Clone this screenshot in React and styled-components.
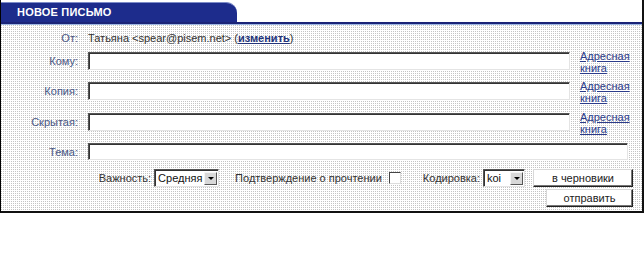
import React from "react";
import styled, { createGlobalStyle } from "styled-components";

const GlobalStyle = createGlobalStyle`
  body {
    margin: 0;
    background: #fff;
    font-family: "Liberation Sans", Arial, sans-serif;
  }
`;

const Frame = styled.div`
  width: 644px;
  box-sizing: border-box;
  border-left: 1px solid #000;
  border-right: 2px solid #111;
  border-bottom: 2px solid #111;
  font-size: 11px;
  color: #333;
`;

const Header = styled.div`
  height: 22px;
  display: flex;
  align-items: flex-end;
  background: #fff;
`;

const Tab = styled.div`
  width: 236px;
  height: 20px;
  box-sizing: border-box;
  background: #1d2c8c;
  border-top: 1px solid #7d8cc8;
  border-top-right-radius: 11px;
  color: #fff;
  font-weight: bold;
  font-size: 11px;
  line-height: 19px;
  padding-left: 16px;
  letter-spacing: 0.2px;
`;

const HeaderLine = styled.div`
  height: 2px;
  background: #1a2478;
  border-bottom: 1px solid #9eb6e2;
`;

const Body = styled.div`
  background-color: #fff;
  background-image: linear-gradient(90deg, transparent 1px, #fff 1px),
    linear-gradient(#c4c4c4 1px, #fff 1px);
  background-size: 2px 2px;
  padding: 6px 9px 4px 0;
`;

const Grid = styled.div`
  display: grid;
  grid-template-columns: 77px 482px 50px;
  grid-template-rows: 21px 30px 31px 30px 26px;
  column-gap: 10px;
  align-items: start;
`;

const Label = styled.div`
  text-align: right;
  color: #4a5784;
  line-height: ${(p) => (p.$tall ? "18px" : "14px")};
`;

const FromText = styled.div`
  grid-column: 2 / 4;
  line-height: 14px;
  white-space: nowrap;
`;

const ChangeLink = styled.a`
  color: #24347a;
  font-weight: bold;
  text-decoration: underline;
`;

const TextInput = styled.div`
  height: ${(p) => (p.$wide ? 17 : 18)}px;
  box-sizing: border-box;
  background: #fff;
  border: 1px solid;
  border-color: #555 #e4e4e4 #e4e4e4 #555;
  box-shadow: inset 1px 1px 0 #333;
  grid-column: ${(p) => (p.$wide ? "2 / 4" : "2")};
  margin-right: ${(p) => (p.$wide ? 2 : 0)}px;
`;

const BookLink = styled.a`
  color: #2b3b8a;
  text-decoration: underline;
  line-height: 12px;
  margin-top: -2px;
  font-size: 11px;
`;

const Controls = styled.div`
  display: flex;
  justify-content: flex-end;
  align-items: center;
  color: #333;
  white-space: nowrap;
`;

const Group = styled.div`
  display: flex;
  align-items: center;
  margin-left: ${(p) => p.$gap || 0}px;
`;

const SelectBox = styled.div`
  display: flex;
  align-items: center;
  justify-content: space-between;
  width: ${(p) => p.$w}px;
  height: 18px;
  box-sizing: border-box;
  margin-left: 3px;
  background: #fff;
  border: 1px solid;
  border-color: #555 #e4e4e4 #e4e4e4 #555;
  box-shadow: inset 1px 1px 0 #333;
  padding: 1px 1px 1px 3px;
  font-size: 11px;
  color: #111;
`;

const Arrow = styled.span`
  width: 13px;
  height: 13px;
  box-sizing: border-box;
  background: #d8d8d8;
  border: 1px solid;
  border-color: #f4f4f4 #555 #555 #f4f4f4;
  display: flex;
  align-items: center;
  justify-content: center;
  &::after {
    content: "";
    border-left: 3px solid transparent;
    border-right: 3px solid transparent;
    border-top: 3px solid #000;
  }
`;

const CheckBox = styled.span`
  width: 12px;
  height: 12px;
  box-sizing: border-box;
  margin-left: 7px;
  background: #fff;
  border: 1px solid;
  border-color: #444 #ddd #ddd #444;
`;

const Button = styled.button`
  width: ${(p) => p.$w}px;
  height: ${(p) => p.$h}px;
  margin-left: ${(p) => p.$ml || 0}px;
  padding: 0;
  box-sizing: border-box;
  background: #fff;
  border: 1px solid;
  border-color: #d8d8d8 #222 #222 #d8d8d8;
  box-shadow: inset -1px -1px 0 #777;
  font-family: "Liberation Sans", Arial, sans-serif;
  font-size: 11px;
  color: #222;
  cursor: pointer;
`;

const SendRow = styled.div`
  display: flex;
  justify-content: flex-end;
  margin-top: 2px;
`;

export default function App() {
  return (
    <>
      <GlobalStyle />
      <Frame>
        <Header>
          <Tab>НОВОЕ ПИСЬМО</Tab>
        </Header>
        <HeaderLine />
        <Body>
          <Grid>
            <Label>От:</Label>
            <FromText>
              Татьяна &lt;spear@pisem.net&gt; (<ChangeLink>изменить</ChangeLink>)
            </FromText>

            <Label $tall>Кому:</Label>
            <TextInput />
            <BookLink>Адресная<br />книга</BookLink>

            <Label $tall>Копия:</Label>
            <TextInput />
            <BookLink>Адресная<br />книга</BookLink>

            <Label $tall>Скрытая:</Label>
            <TextInput />
            <BookLink>Адресная<br />книга</BookLink>

            <Label $tall>Тема:</Label>
            <TextInput $wide />
          </Grid>
          <Controls>
            <Group>
              Важность:
              <SelectBox $w={65}>
                Средняя
                <Arrow />
              </SelectBox>
            </Group>
            <Group $gap={16}>
              Подтверждение о прочтении
              <CheckBox />
            </Group>
            <Group $gap={22}>
              Кодировка:
              <SelectBox $w={42}>
                koi
                <Arrow />
              </SelectBox>
            </Group>
            <Button $w={100} $h={18} $ml={8}>
              в черновики
            </Button>
          </Controls>
          <SendRow>
            <Button $w={87} $h={18}>
              отправить
            </Button>
          </SendRow>
        </Body>
      </Frame>
    </>
  );
}
